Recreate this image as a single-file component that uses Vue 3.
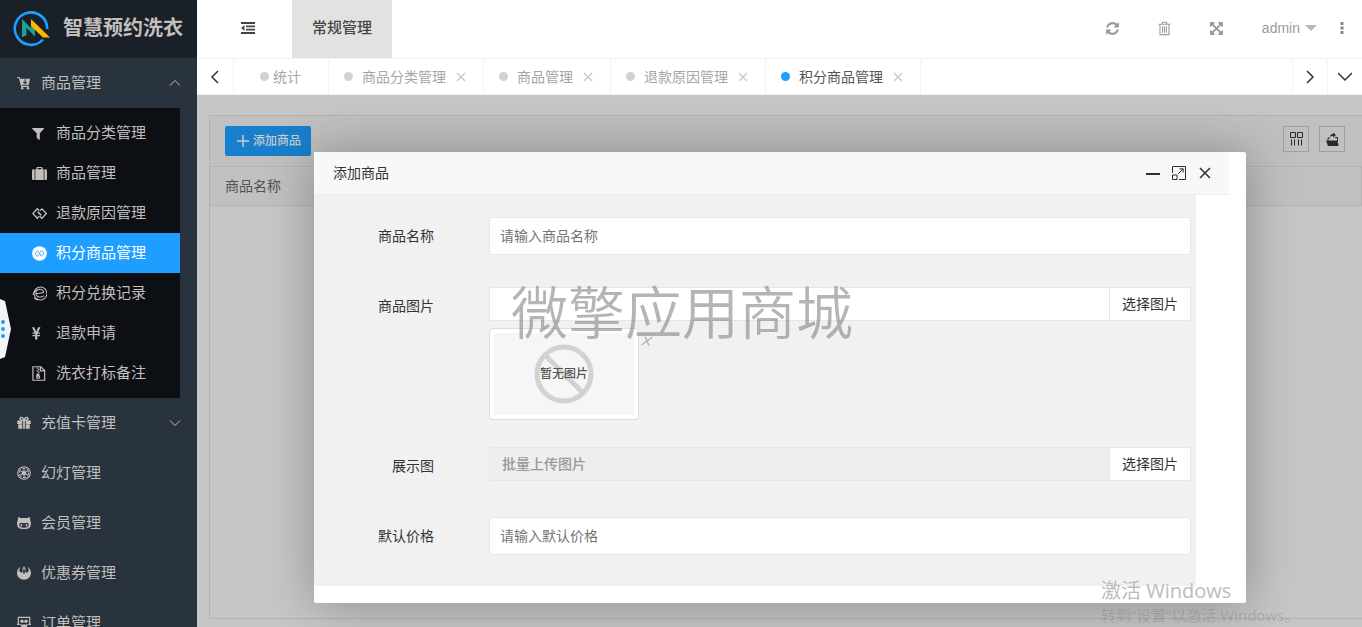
<script setup>
import { ref } from 'vue'

const icons = {
  cart: '<path d="M0 1h3l.6 2H15l-1.600 7H5.500l.4 1.200H13.500v1.300H4.800L2.100 2.400H0z"/><circle cx="6" cy="14" r="1.400"/><circle cx="12.500" cy="14" r="1.400"/><path d="M9.200 3.800v4.600M7.200 6.600l2 2 2-2" fill="none" stroke="#28333e" stroke-width="1.200"/>',
  filter: '<path d="M.6 2h11.800c.5 0 .7.500.4.900L8.300 7.600v6.700c0 .5-.5.700-.9.400L5 12.400V7.600L.2 2.900C-.1 2.500.1 2 .6 2z"/>',
  suitcase: '<path d="M4.700 3.500V2c0-.6.400-1 1-1h4.600c.6 0 1 .4 1 1v1.500h1.200V15H3.500V3.500zm1.400 0h3.800V2.200H6.100zM0 5.200c0-1 .7-1.700 1.700-1.700h1.100V15H1.700C.7 15 0 14.300 0 13.300zM13.200 3.500h1.100c1 0 1.700.7 1.700 1.700v8.100c0 1-.7 1.700-1.700 1.700h-1.100z"/>',
  link: '<path d="M7.500 4.800 5.600 2.900.9 8l4.700 5 2.200-2.200M6 6.200l3.500 3.700M8.400 11.200l2.200 1.900L15.300 8l-4.700-5-2.300 2.200M9.900 9.800 6.300 6" fill="none" stroke="currentColor" stroke-width="1.400"/>',
  badge: '<circle cx="8" cy="8" r="7.800"/><path d="M7.200 6.200 5.900 5.200 3 8l2.900 2.800 1.600-1.500M6.800 7.200l2.200 2M8.800 9.800l1.300 1L13 8l-2.900-2.800-1.600 1.500M9.200 8.800 7 6.800" fill="none" stroke="#1e9fff" stroke-width="1"/>',
  edge: '<circle cx="9" cy="8" r="6.900" fill="none" stroke="currentColor" stroke-width="1.100"/><path d="M1 9.500C2.500 5.500 5 4 8 3.600c2.800-.2 4.500 1.200 4.300 3.300L5 8.300M4.600 5.500c-1.300 3.800.5 6.300 3.900 6.300 2 0 3.300-.5 4.500-1.500M2 12.500c1 1.300 2.400 2.100 4 2.400" fill="none" stroke="currentColor" stroke-width="1.100"/>',
  yen: '<path d="M0 1.300h2.500L4.500 6l2-4.700H9L6.500 7H8.600v1.300H5.700v1.200h2.900v1.300H5.700V14.500H3.300v-3.700H.5V9.500h2.800V8.300H.5V7h2z"/>',
  zip: '<path d="M1 .8h8.500l4 4v10.400H1z M9 .8v4.500h4.500" fill="none" stroke="currentColor" stroke-width="1.300"/><path d="M5 1.500h1.500V3H5zM6.500 3H8v1.500H6.500zM5 4.500h1.500V6H5zM6.500 6H8v1.500H6.500zM5 8h2.500l1.200 4c.2 1-.8 1.800-2.200 1.800S4.100 13 4.300 12zm.7 3.500v1h1.600v-1z"/>',
  gift: '<path d="M.3 5h5.700v4H.3zm6.700 0h2v9.500H7zm3 0h5.700v4H10zM1.500 9.500H6v5H1.500zm8.500 0h4.500v5H10z"/><path d="M7.500 4.800C5 4.800 3.300 4.200 3.300 2.900S5.800 1 6.600 2.300L8 4.800l1.400-2.500c.8-1.300 3.300-.7 3.300.6S11 4.800 8.500 4.800" fill="none" stroke="currentColor" stroke-width="1.600"/>',
  empire: '<circle cx="8" cy="8" r="7.200" fill="none" stroke="currentColor" stroke-width="1.300"/><circle cx="8" cy="8" r="5.200" fill="none" stroke="currentColor" stroke-width="1.200" stroke-dasharray="3.800 1.650"/><circle cx="8" cy="8" r="2.400"/><path d="M8 4v8M4.500 6l7 4M4.500 10l7-4" stroke="currentColor" stroke-width="1.400"/>',
  cat: '<path fill-rule="evenodd" d="M1.200 1.500c1.200-.2 2.500.4 3.500 1.200 2-.4 4.600-.4 6.600 0 1-.8 2.300-1.400 3.500-1.200.4 1.200.4 2.200.1 3.100.8 1 1.100 2.600 1 4.400-.2 4.300-2.500 5.800-7.900 5.800S.3 13.300.1 9C0 7.200.3 5.600 1.100 4.600.8 3.700.8 2.700 1.200 1.500zM5 8c-1.600-.2-2.400.5-2.400 2.200 0 2.300 1.600 3.100 5.400 3.100s5.400-.8 5.400-3.100C13.400 8.500 12.600 7.800 11 8c-2.200.2-3.800.2-6 0z"/><rect x="4.200" y="9" width="1.900" height="2.900" rx=".9"/><rect x="9.900" y="9" width="1.900" height="2.900" rx=".9"/>',
  rebel: '<path d="M4 1C1.600 2.300 0 4.700 0 7.700 0 12.200 3.500 15.700 8 15.700s8-3.500 8-8c0-3-1.600-5.400-4-6.700 1.300 2 1.700 3.700 1 5.200-.7 1.400-2.400 1.700-3.400.7-.7-.8-.5-2 .5-2.900L8 0 5.900 4c1 .9 1.200 2.100.5 2.900-1 1-2.700.7-3.400-.7C2.300 4.700 2.700 3 4 1zM7.200 3h1.600v6H7.200z"/>',
  slides: '<path d="M1.500 1.500h13v8M1.500 1.500v8M0 9.500h3M13 9.500h3" fill="none" stroke="currentColor" stroke-width="1.400"/><circle cx="5.700" cy="6" r="2"/><circle cx="10.300" cy="6" r="2"/><path d="M3 9c1.500.8 3 .8 5 .8s3.500 0 5-.8c0 1-.8 1.700-1.700 2V14c0 1-1.500 1.500-3 1.500S5 15 5 14v-3c-1-.3-2-1-2-2z"/>'
}

const children = [
  { label: '商品分类管理', icon: 'filter' },
  { label: '商品管理', icon: 'suitcase' },
  { label: '退款原因管理', icon: 'link' },
  { label: '积分商品管理', icon: 'badge' },
  { label: '积分兑换记录', icon: 'edge' },
  { label: '退款申请', icon: 'yen' },
  { label: '洗衣打标备注', icon: 'zip' }
]
const rest = [
  { label: '充值卡管理', icon: 'gift', more: true },
  { label: '幻灯管理', icon: 'empire' },
  { label: '会员管理', icon: 'cat' },
  { label: '优惠券管理', icon: 'rebel' },
  { label: '订单管理', icon: 'slides' }
]
const tabs = ['商品分类管理', '商品管理', '退款原因管理', '积分商品管理']
const active = ref('积分商品管理')
const name = ref('')
const image = ref('')
const price = ref('')
</script>

<template>
  <div class="app">
    <aside class="side">
      <div class="brand">
        <svg class="logo" viewBox="0 0 38 38" aria-hidden="true">
          <path d="M31 30.500A16.200 16.200 0 1 1 35.200 20" fill="none" stroke="#1e9fff" stroke-width="2.600" />
          <path d="M10 10v18l4.500-1.500V19l8.500 8.500V17l-4-1.500v3.600z" fill="#1aa094" />
          <path d="M19 10v7l12 11.500h7z" fill="#ffb800" />
        </svg>
        <h1>智慧预约洗衣</h1>
      </div>
      <nav>
        <a href="#" class="item">
          <svg class="ico" viewBox="0 0 16 16" v-html="icons.cart" />商品管理
          <svg class="arrow" viewBox="0 0 12 12"><path d="M1 8.500 6 3.500l5 5" /></svg>
        </a>
        <div class="sub">
          <a v-for="c in children" :key="c.label" href="#" class="child" :class="{ on: c.label === active }">
            <svg class="ico" viewBox="0 0 16 16" v-html="icons[c.icon]" />{{ c.label }}
          </a>
        </div>
        <a v-for="r in rest" :key="r.label" href="#" class="item">
          <svg class="ico" viewBox="0 0 16 16" v-html="icons[r.icon]" />{{ r.label }}
          <svg v-if="r.more" class="arrow" viewBox="0 0 12 12"><path d="M1 3.500l5 5 5-5" /></svg>
        </a>
      </nav>
      <button class="handle" aria-label="展开">
        <svg viewBox="0 0 11 60"><path d="M0 0l5 2 6 28-6 28-5 2z" fill="#f2f4f6" /><g fill="#1e9fff"><circle cx="3" cy="23" r="2" /><circle cx="3" cy="30" r="2" /><circle cx="3" cy="37" r="2" /></g></svg>
      </button>
    </aside>

    <div class="page">
      <header class="top">
        <button class="fold" aria-label="收起菜单">
          <svg viewBox="0 0 14 12"><path d="M0 0h14v2H0zM5 3.500h9v1.800H5zM5 6.800h9v1.800H5zM0 10h14v2H0zM3.500 3.300v5.400L0 6z" /></svg>
        </button>
        <a href="#" class="module">常规管理</a>
        <div class="tools">
          <button aria-label="刷新"><svg viewBox="0 0 1792 1792"><path d="M1639 1056q0 5-1 7-64 268-268 434.500t-478 166.500q-146 0-282.500-55t-243.500-157l-129 129q-19 19-45 19t-45-19-19-45v-448q0-26 19-45t45-19h448q26 0 45 19t19 45-19 45l-137 137q71 66 161 102t187 36q134 0 250-65t186-179q11-17 53-117 8-23 30-23h192q13 0 22.500 9.500t9.500 22.500zm25-800v448q0 26-19 45t-45 19h-448q-26 0-45-19t-19-45 19-45l138-138q-148-137-349-137-134 0-250 65t-186 179q-11 17-53 117-8 23-30 23h-199q-13 0-22.500-9.500t-9.500-22.500v-7q65-268 270-434.500t480-166.500q146 0 284 55.500t245 156.500l130-129q19-19 45-19t45 19 19 45z" /></svg></button>
          <button class="lilac" aria-label="清除"><svg viewBox="0 0 14 14"><path d="M1.500 3h11M5 3V1.200h4V3M2.800 3v9.700h8.400V3M5.200 5v6M7 5v6M8.800 5v6" fill="none" stroke="currentColor" /></svg></button>
          <button aria-label="全屏"><svg viewBox="0 0 1792 1792"><path d="M1411 541l-355 355 355 355 144-144q29-31 70-14 39 17 39 59v448q0 26-19 45t-45 19h-448q-42 0-59-40-17-39 14-69l144-144-355-355-355 355 144 144q31 30 14 69-17 40-59 40h-448q-26 0-45-19t-19-45v-448q0-42 40-59 39-17 69 14l144 144 355-355-355-355-144 144q-19 19-45 19-12 0-24-5-40-17-40-59v-448q0-26 19-45t45-19h448q42 0 59 40 17 39-14 69l-144 144 355 355 355-355-144-144q-31-30-14-69 17-40 59-40h448q26 0 45 19t19 45v448q0 42-39 59-13 5-25 5-26 0-45-19z" /></svg></button>
        </div>
        <button class="user">admin<svg viewBox="0 0 12 6"><path d="M0 0h12L6 6z" /></svg></button>
        <button class="more" aria-label="更多"><svg viewBox="0 0 3 12"><path d="M0 0h3v3H0zM0 4.500h3v3H0zM0 9h3v3H0z" /></svg></button>
      </header>

      <div class="tabs">
        <button class="step" aria-label="上一个"><svg viewBox="0 0 14 14"><path d="M10 1 4 7l6 6" /></svg></button>
        <a href="#" class="tab home"><i class="dot" />统计</a>
        <a v-for="t in tabs" :key="t" href="#" class="tab" :class="{ on: t === active }">
          <i class="dot" />{{ t }}<svg class="x" viewBox="0 0 10 10"><path d="M1 1l8 8M9 1 1 9" /></svg>
        </a>
        <button class="step next" aria-label="下一个"><svg viewBox="0 0 14 14"><path d="M4 1l6 6-6 6" /></svg></button>
        <button class="step down" aria-label="标签操作"><svg viewBox="0 0 14 14"><path d="M0 3l7 7 7-7" /></svg></button>
      </div>

      <main class="body">
        <section class="card">
          <div class="bar">
            <button class="add"><svg viewBox="0 0 14 14"><path d="M7 1v12M1 7h12" /></svg>添加商品</button>
            <span class="grow" />
            <button class="sq" aria-label="筛选列"><svg viewBox="0 0 14 14"><path d="M1.500 .5h5v5h-5zM8.500 .5h5v5h-5zM2.500 7.500v6M5.500 7.500v6M9.500 7.500v6M12.500 7.500v6" fill="none" stroke="currentColor" /></svg></button>
            <button class="sq" aria-label="导出"><svg viewBox="0 0 14 14"><path d="M1 8.500h11l1.500 4.500c0 .6-.4 1-1 1H3z" /><path d="M3 8.500V6h2M12.500 10V5.500H10" fill="none" stroke="currentColor" /><path d="M5 5c0-2 1-3 3-3V.5L11 3 8 5.500V4C6.500 4 5.500 4.200 5 5z" /></svg></button>
          </div>
          <table><thead><tr><th>商品名称</th></tr></thead></table>
        </section>
      </main>
    </div>

    <div class="dialog" role="dialog" aria-labelledby="dialog-title">
      <div class="head">
        <h2 id="dialog-title">添加商品</h2>
        <button aria-label="最小化"><svg viewBox="0 0 14 14"><path d="M0 8h14" stroke-width="2" /></svg></button>
        <button aria-label="最大化"><svg viewBox="0 0 14 14"><path d="M.5 7V.5h13v13H7M.5 9h4.500v4.500H.5zM6 8l5-5M7.500 2.800h3.700v3.700" /></svg></button>
        <button aria-label="关闭"><svg viewBox="0 0 14 14"><path d="M2 2l10 10M12 2 2 12" stroke-width="1.500" /></svg></button>
      </div>
      <form class="form" @submit.prevent>
        <div class="row">
          <label for="name">商品名称</label>
          <input id="name" v-model="name" class="text" placeholder="请输入商品名称">
        </div>
        <div class="row photo">
          <label for="image">商品图片</label>
          <div class="field">
            <div class="group"><input id="image" v-model="image"><button type="button">选择图片</button></div>
            <div class="preview">
              <div class="thumb">
                <svg viewBox="0 0 60 60"><circle cx="30" cy="30" r="27" /><path d="M11 11l38 38" /></svg>
                <span>暂无图片</span>
              </div>
              <button type="button" class="remove" aria-label="移除"><svg viewBox="0 0 12 10"><path d="M.5 9 11.500 1M4 .5 8 9.500" /></svg></button>
            </div>
          </div>
        </div>
        <div class="row">
          <label for="gallery">展示图</label>
          <div class="field">
            <div class="group off"><input id="gallery" readonly placeholder="批量上传图片"><button type="button">选择图片</button></div>
          </div>
        </div>
        <div class="row">
          <label for="price">默认价格</label>
          <input id="price" v-model="price" class="text" placeholder="请输入默认价格">
        </div>
      </form>
      <div class="mark">微擎应用商城</div>
    </div>

    <div class="activate">
      <p>激活 Windows</p>
      <small>转到“设置”以激活 Windows。</small>
    </div>
  </div>
</template>

<style>
body { margin: 0; }
</style>

<style scoped>
* { box-sizing: border-box; }
.app {
  position: relative;
  display: flex;
  height: 100vh;
  overflow: hidden;
  font: 14px/20px "Liberation Sans", "Noto Sans CJK SC", sans-serif;
  color: #333;
}
a { text-decoration: none; color: inherit; }
button { padding: 0; border: 0; background: none; font: inherit; color: inherit; cursor: pointer; }
input { font: inherit; min-width: 0; outline: 0; }
svg { display: block; fill: currentColor; }
h1, h2, p { margin: 0; }

.side { position: relative; flex: none; width: 197px; background: #28333e; color: #c2bfbd; font-size: 15px; overflow: hidden; }
.brand { display: flex; align-items: center; gap: 13px; height: 58px; padding: 0 0 2px 12px; background: #1a2027; }
.logo { width: 38px; height: 38px; }
.brand h1 { font-size: 20px; line-height: 28px; white-space: nowrap; }
.item, .child { display: flex; align-items: center; white-space: nowrap; }
.item { height: 50px; padding: 0 16px 0 17px; gap: 10px; }
.item .ico { width: 14px; height: 14px; }
.arrow { width: 12px; height: 12px; margin-left: auto; fill: none; stroke: currentColor; }
.sub { width: 180px; padding: 5px 0; background: #0c0f13; }
.child { height: 40px; padding-left: 32px; gap: 9px; }
.child .ico { width: 15px; height: 15px; }
.child.on { background: #1e9fff; color: #fff; }
.handle { position: absolute; left: 0; top: 299px; }
.handle svg { width: 11px; height: 60px; }

.page { flex: 1; min-width: 0; display: flex; flex-direction: column; }
.top { display: flex; align-items: center; height: 58px; padding: 0 18px 2px 0; background: #fff; color: #999; }
.fold { width: 95px; padding-left: 44px; color: #444; }
.fold svg { width: 14px; height: 12px; }
.module { align-self: flex-start; height: 58px; padding: 0 20px; line-height: 56px; font-size: 15px; font-weight: 500; color: #444; background: #e2e2e2; }
.tools { display: flex; gap: 37px; margin: 0 38px 0 auto; }
.tools svg { width: 15px; height: 15px; }
.tools .lilac { color: #9a98a6; }
.user { display: flex; align-items: center; gap: 5px; }
.user svg { width: 12px; height: 6px; fill: #b8b8b8; }
.more { margin-left: 23px; color: #888490; }
.more svg { width: 4px; height: 12px; }

.tabs { display: flex; height: 37px; background: #fff; border-top: 1px solid #f3f3f3; border-bottom: 1px solid #f3f3f3; color: #a6a6a6; }
.step { display: grid; place-items: center; width: 37px; border-right: 1px solid #f3f3f3; }
.step svg { width: 14px; height: 14px; fill: none; stroke: #333; stroke-width: 1.500; }
.step.next { margin-left: auto; }
.step.next, .step.down { width: 35px; border-left: 1px solid #f3f3f3; border-right: 0; }
.tab { display: flex; align-items: center; padding: 0 17px 0 15px; border-right: 1px solid #f3f3f3; white-space: nowrap; }
.dot { width: 9px; height: 9px; margin-right: 9px; border-radius: 50%; background: #d2d2d2; }
.tab.home { padding: 0 27px 0 26px; }
.home .dot { margin-right: 4px; }
.tab.on { color: #555; }
.on .dot { background: #1e9fff; }
.x { width: 10px; height: 10px; margin-left: 10px; stroke: #c8c8c8; stroke-width: 1.300; }

.body { flex: 1; display: flex; padding: 20px 0 8px 12px; background: #c6c6c6; }
.card { flex: 1; border: 1px solid #b3b3b3; border-right: 0; }
.bar { display: flex; gap: 10px; height: 50px; padding: 10px 17px 0 15px; background: #c0c0c0; }
.grow { flex: 1; }
.add { display: flex; align-items: center; gap: 3px; height: 30px; padding: 0 10px 0 11px; border-radius: 2px; background: #187fcc; color: #ccc; font-size: 12px; font-weight: 500; }
.add svg { width: 14px; height: 14px; stroke: #ccc; stroke-width: 1.500; }
.sq { display: grid; place-items: center; width: 26px; height: 26px; border: 1px solid #a0a0a0; color: #2a2a2a; }
.sq svg { width: 14px; height: 14px; }
table { width: 100%; border-collapse: collapse; background: #c0c0c0; }
th { height: 39px; padding: 0 15px; border: 1px solid #b3b3b3; border-left: 0; text-align: left; font-weight: 400; color: #525252; }

.dialog {
  position: absolute;
  top: 152px;
  left: 314px;
  right: 116px;
  background: #fff;
  border-radius: 2px;
  box-shadow: 1px 1px 50px rgba(0, 0, 0, .3);
  padding-bottom: 17px;
}
.head { display: flex; align-items: center; gap: 12px; height: 43px; margin-right: 17px; padding: 0 17px 0 19px; background: #f8f8f8; border-bottom: 1px solid #eee; }
.head h2 { flex: 1; font-size: 14px; font-weight: 400; }
.head svg { width: 14px; height: 14px; fill: none; stroke: #2e2d3c; }
.form { display: flex; flex-direction: column; gap: 32px; margin-right: 50px; padding: 22px 5px 31px 0; background: #f1f1f1; }
.row { display: flex; gap: 55px; min-height: 38px; }
.row.photo { margin-bottom: -5px; }
label { flex: none; width: 120px; line-height: 38px; text-align: right; }
.text { flex: 1; height: 38px; padding: 0 10px; border: 1px solid #e6e6e6; border-radius: 2px; background: #fff; }
input::placeholder { color: #757575; opacity: 1; }
.field { flex: 1; }
.group { display: flex; height: 34px; border: 1px solid #e6e6e6; background: #fff; }
.group input { flex: 1; padding: 0 12px; border: 0; background: none; }
.group button { width: 81px; border-left: 1px solid #e6e6e6; background: #fff; }
.off input { background: #eee; font-weight: 500; }
.off input::placeholder { color: #999; }
.preview { display: flex; align-items: flex-start; gap: 2px; margin-top: 7px; }
.thumb { display: grid; place-items: center; width: 150px; height: 92px; border: 1px solid #ddd; border-radius: 4px; background: #f6f6f6; box-shadow: inset 0 0 0 4px #fff; }
.thumb > * { grid-area: 1 / 1; }
.thumb svg { width: 60px; height: 60px; fill: none; stroke: #d2d2d2; stroke-width: 5; }
.thumb span { font-size: 12px; font-weight: 500; color: #555; }
.remove { margin-top: 8px; }
.remove svg { width: 12px; height: 10px; fill: none; stroke: #b4b4b4; stroke-width: 1.500; }
.mark { position: absolute; left: 197px; top: 117px; font: 350 57px/80px "Noto Sans CJK SC", sans-serif; color: rgba(128, 128, 128, .58); white-space: nowrap; pointer-events: none; }

.activate { position: absolute; right: 61px; bottom: 1px; width: 200px; font-family: "Open Sans", "Noto Sans CJK SC", sans-serif; white-space: nowrap; pointer-events: none; }
.activate p { font-size: 20px; line-height: 26px; color: #bcbcbc; }
.activate small { display: block; font-size: 15px; line-height: 22px; color: rgba(110, 110, 110, .3); }
</style>
